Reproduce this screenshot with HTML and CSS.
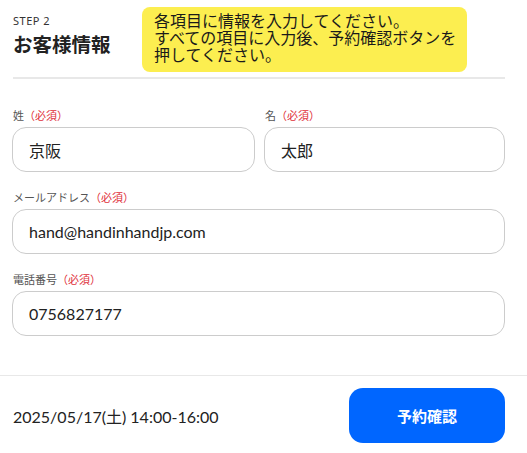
FILE: index.html
```html
<!DOCTYPE html>
<html lang="ja">

<head>
    <meta charset="UTF-8">
    <meta name="viewport" content="width=device-width, initial-scale=1.0">
    <title>お客様情報</title>
    <link rel="stylesheet" href="styles.css">
</head>

<body>
    <div class="container">
        <!-- ヘッダー -->
        <div class="header">
            <div class="step">
                <div class="step-label">STEP 2</div>
                <h1>お客様情報</h1>
            </div>
            <div class="notice">各項目に情報を入力してください。<br>すべての項目に入力後、予約確認ボタンを<br>押してください。</div>
        </div>

        <!-- 入力フォーム -->
        <div class="form">
            <div class="name-row">
                <div class="field">
                    <label for="lastName">姓<span class="required">（必須）</span></label>
                    <input type="text" id="lastName" value="京阪">
                </div>
                <div class="field">
                    <label for="firstName">名<span class="required">（必須）</span></label>
                    <input type="text" id="firstName" value="太郎">
                </div>
            </div>
            <div class="field">
                <label for="email">メールアドレス<span class="required">（必須）</span></label>
                <input type="email" id="email" value="hand@handinhandjp.com">
            </div>
            <div class="field">
                <label for="tel">電話番号<span class="required">（必須）</span></label>
                <input type="tel" id="tel" value="0756827177">
            </div>
        </div>
    </div>

    <div class="footer">
        <div class="date">2025/05/17(土) 14:00-16:00</div>
        <button class="button">予約確認</button>
    </div>
</body>

</html>
```

FILE: styles.css
```css
body {
    font-family: Lato, "Noto Sans CJK JP", sans-serif;
    background-color: #ffffff;
    color: #222222;
    margin: 0;
    padding: 0;
}

.container {
    padding: 0 22px 0 12px;
}

.header {
    display: flex;
    align-items: flex-start;
    padding-top: 7px;
    padding-bottom: 5px;
    margin-left: 1px;
    border-bottom: 2px solid #e8e8e8;
}

.step {
    width: 129px;
    padding-top: 7px;
}

.step-label {
    font-family: "Noto Sans", sans-serif;
    font-size: 11px;
    line-height: 14px;
    letter-spacing: 0.5px;
    color: #333333;
}

h1 {
    margin: 4px 0 0;
    font-family: "Noto Sans CJK JP", sans-serif;
    font-size: 19.5px;
    line-height: 24px;
    font-weight: 700;
    color: #222222;
}

.notice {
    width: 301px;
    height: 51px;
    padding: 5px 12px 9px;
    background-color: #fcee50;
    border-radius: 8px;
    font-family: "Noto Sans CJK JP", sans-serif;
    font-size: 16px;
    line-height: 17px;
    color: #1a1a1a;
    white-space: nowrap;
}

.form {
    padding-top: 29px;
    padding-bottom: 39px;
    display: flex;
    flex-direction: column;
    gap: 18px;
}

.name-row {
    display: grid;
    grid-template-columns: 243px 1fr;
    gap: 9px;
}

.field {
    display: flex;
    flex-direction: column;
}

.field label {
    font-family: "Noto Sans CJK JP", sans-serif;
    font-size: 11px;
    line-height: 14px;
    color: #555555;
    margin-bottom: 5px;
    padding-left: 1px;
}

.required {
    color: #e0303a;
}

.field input {
    box-sizing: border-box;
    width: 100%;
    height: 45px;
    padding: 0 16px;
    font-family: Lato, "Noto Sans CJK JP", sans-serif;
    font-size: 16px;
    color: #222222;
    border: 1px solid #cccccc;
    border-radius: 14px;
    outline: none;
}

.footer {
    display: flex;
    align-items: center;
    justify-content: space-between;
    padding: 12px 22px 10px 13px;
    border-top: 1px solid #e8e8e8;
}

.date {
    font-size: 16px;
    color: #222222;
}

.button {
    width: 156px;
    height: 55px;
    font-family: "Noto Sans CJK JP", sans-serif;
    font-size: 15px;
    font-weight: 700;
    color: #ffffff;
    background-color: #0066ff;
    border: none;
    border-radius: 14px;
}
```
